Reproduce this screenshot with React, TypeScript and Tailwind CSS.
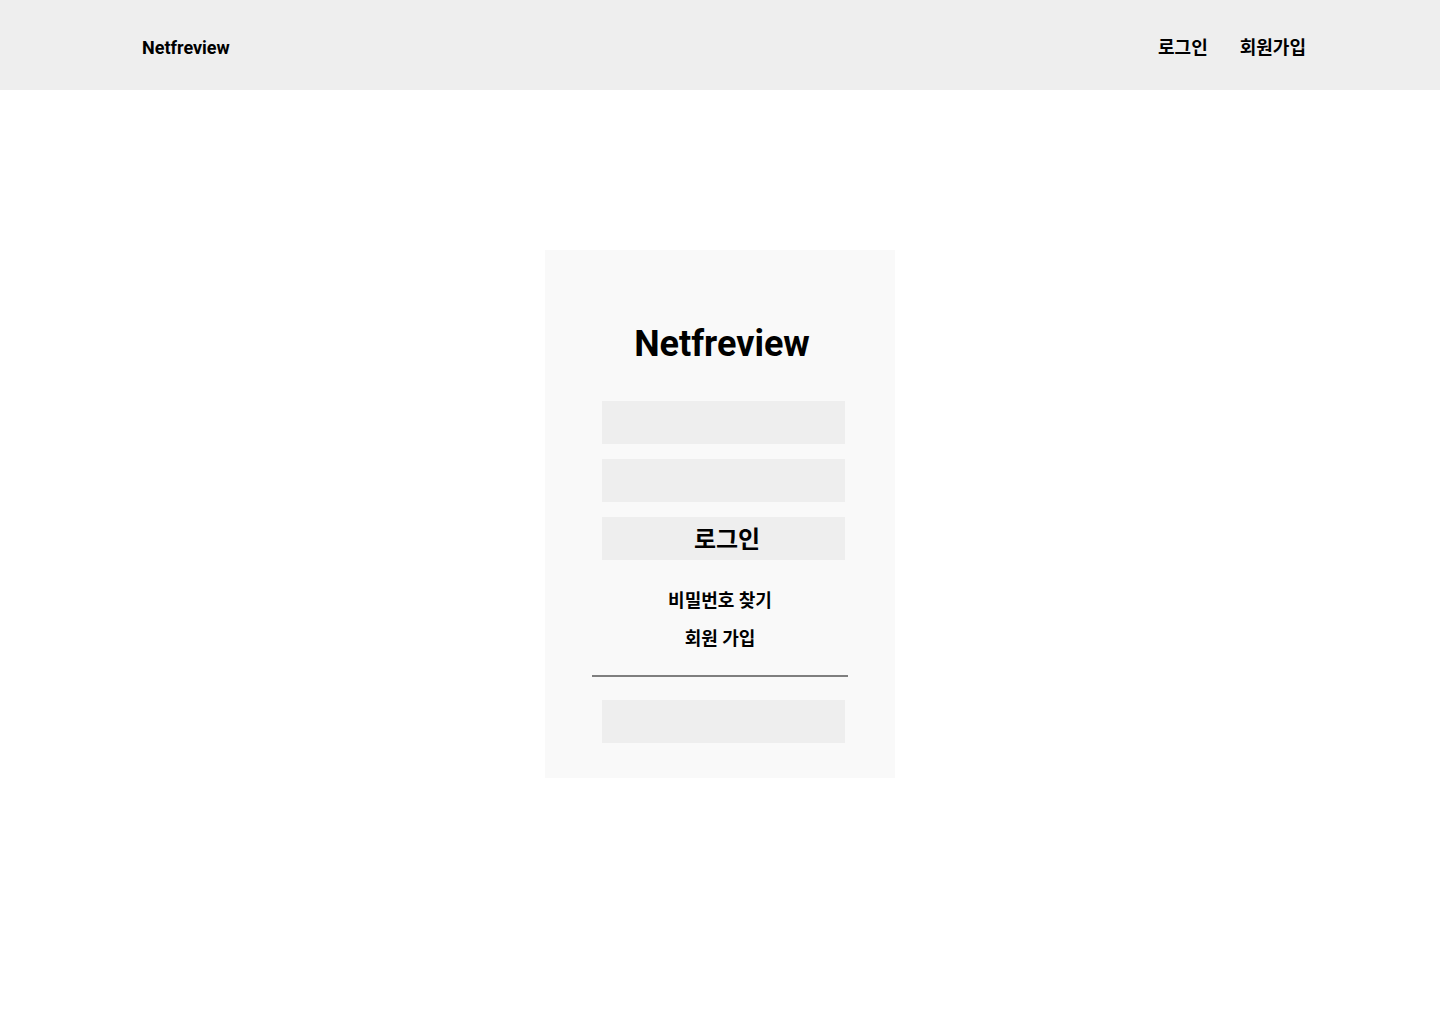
import React from 'react';

const font = { fontFamily: 'Roboto, "Noto Sans CJK KR", sans-serif' };

const Header = () => {
  return (
    <header className="h-[90px] bg-[#eeeeee] flex items-center justify-between pt-[6px] pl-[142px] pr-[134px]">
      <span className="text-[18px] font-bold text-black leading-[24px]">Netfreview</span>
      <nav className="flex items-center gap-[32px]">
        <a className="text-[18px] font-bold text-black leading-[24px]">로그인</a>
        <a className="text-[18px] font-bold text-black leading-[24px]">회원가입</a>
      </nav>
    </header>
  );
};

const LoginCard = () => {
  return (
    <div className="w-[350px] h-[528px] bg-[#f9f9f9] flex flex-col pt-[74px]">
      <h1 className="text-[36px] font-bold leading-[40px] text-black text-center pl-[4px]">Netfreview</h1>
      <div className="mt-[37px] ml-[57px] w-[243px] flex flex-col gap-[15px]">
        <input className="h-[43px] bg-[#eeeeee] outline-none px-3" />
        <input type="password" className="h-[43px] bg-[#eeeeee] outline-none px-3" />
        <button className="h-[43px] bg-[#eeeeee] text-[24px] font-bold text-black leading-[43px] pl-[7px] pt-[2px]">로그인</button>
      </div>
      <div className="mt-[27px] flex flex-col items-center gap-[10px]">
        <a className="text-[18px] font-bold leading-[28px] text-black">비밀번호 찾기</a>
        <a className="text-[18px] font-bold leading-[28px] text-black">회원 가입</a>
      </div>
      <div className="mt-[22px] ml-[47px] w-[256px] h-[2px] bg-[#7f7f7f]" />
      <div className="mt-[23px] ml-[57px] w-[243px] h-[43px] bg-[#eeeeee]" />
    </div>
  );
};

export default function App() {
  return (
    <div className="min-h-[1024px] bg-white" style={font}>
      <Header />
      <main className="flex justify-center pt-[160px]">
        <LoginCard />
      </main>
    </div>
  );
}
